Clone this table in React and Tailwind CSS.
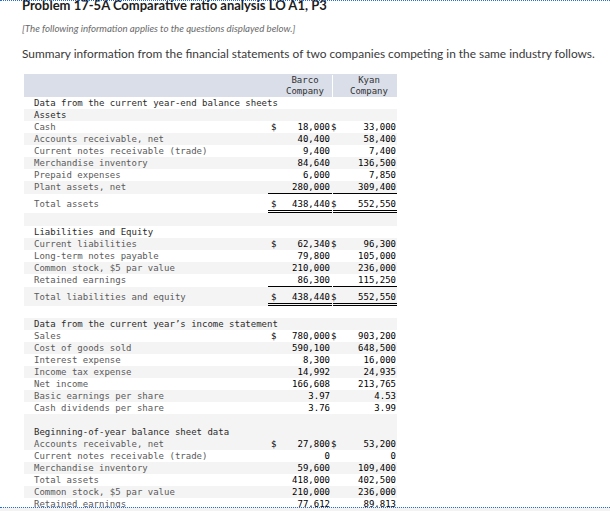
import React from 'react';

const mono = { fontFamily: '"DejaVu Sans Mono", "Liberation Mono", monospace' };

const rows = [
  { label: 'Data from the current year-end balance sheets', head: true },
  { label: 'Assets', head: true, g: true },
  { label: 'Cash', b: '18,000', k: '33,000', d: true },
  { label: 'Accounts receivable, net', b: '40,400', k: '58,400', g: true },
  { label: 'Current notes receivable (trade)', b: '9,400', k: '7,400' },
  { label: 'Merchandise inventory', b: '84,640', k: '136,500', g: true },
  { label: 'Prepaid expenses', b: '6,000', k: '7,850' },
  { label: 'Plant assets, net', b: '280,000', k: '309,400', g: true, under: true },
  { label: 'Total assets', b: '438,440', k: '552,550', d: true, total: true },
  { blank: true, h: 'h-[13px]', g: true },
  { label: 'Liabilities and Equity', head: true },
  { label: 'Current liabilities', b: '62,340', k: '96,300', d: true, g: true },
  { label: 'Long-term notes payable', b: '79,800', k: '105,000' },
  { label: 'Common stock, $5 par value', b: '210,000', k: '236,000', g: true },
  { label: 'Retained earnings', b: '86,300', k: '115,250', under: true },
  { label: 'Total liabilities and equity', b: '438,440', k: '552,550', d: true, total: true, g: true },
  { blank: true, h: 'h-[12px]' },
  { label: 'Data from the current year\u2019s income statement', head: true, g: true },
  { label: 'Sales', b: '780,000', k: '903,200', d: true },
  { label: 'Cost of goods sold', b: '590,100', k: '648,500', g: true },
  { label: 'Interest expense', b: '8,300', k: '16,000' },
  { label: 'Income tax expense', b: '14,992', k: '24,935', g: true },
  { label: 'Net income', b: '166,608', k: '213,765' },
  { label: 'Basic earnings per share', b: '3.97', k: '4.53', g: true },
  { label: 'Cash dividends per share', b: '3.76', k: '3.99' },
  { blank: true, h: 'h-[12px]', g: true },
  { label: 'Beginning-of-year balance sheet data', head: true, g: true },
  { label: 'Accounts receivable, net', b: '27,800', k: '53,200', d: true, g: true },
  { label: 'Current notes receivable (trade)', b: '0', k: '0' },
  { label: 'Merchandise inventory', b: '59,600', k: '109,400', g: true },
  { label: 'Total assets', b: '418,000', k: '402,500' },
  { label: 'Common stock, $5 par value', b: '210,000', k: '236,000', g: true },
  { label: 'Retained earnings', b: '77,612', k: '89,813' },
];

function Row({ r }) {
  const bg = r.g ? 'bg-[#f4f4f4]' : 'bg-white';
  if (r.blank) return <div className={`${r.h} ${bg}`} />;
  const line = r.total
    ? 'border-b-[3px] border-double border-black'
    : r.under
    ? 'border-b border-black'
    : '';
  return (
    <div className={`flex ${bg} ${r.total ? 'pt-[4px]' : ''}`}>
      <div
        className={`w-[244px] shrink-0 whitespace-nowrap pl-[10px] ${
          r.head ? 'text-[#2b2b2b]' : 'text-[#5a5a5a]'
        }`}
      >
        {r.label}
      </div>
      {!r.head && (
        <>
          <div className={`w-[64px] shrink-0 flex justify-between pl-[3px] pr-[2px] ${line}`}>
            <span>{r.d ? '$' : ''}</span>
            <span>{r.b}</span>
          </div>
          <div className="w-[1px] shrink-0" />
          <div className={`w-[64px] shrink-0 flex justify-between pr-[1px] ${line}`}>
            <span className="-ml-[2px]">{r.d ? '$' : ''}</span>
            <span>{r.k}</span>
          </div>
        </>
      )}
    </div>
  );
}

export default function App() {
  return (
    <div className="relative h-[511px] w-[610px] overflow-hidden bg-white">
      {/* focus outline edges */}
      <div className="absolute left-0 right-0 top-0 z-10 border-t border-dotted border-[#2a6fcf]" />
      <div className="absolute left-0 right-0 top-[507px] z-10 h-[4px] border-t border-dotted border-[#2a6fcf] bg-[#f3f3f3]" />

      <div className="pl-[22px]" style={{ fontFamily: 'Lato, "Open Sans", sans-serif' }}>
        <h1 className="-mt-[3px] whitespace-nowrap text-[13px] font-bold leading-[16px] text-[#1c1c1c]">
          Problem 17-5A Comparative ratio analysis LO A1, P3
        </h1>
        <p className="mt-[8px] whitespace-nowrap text-[9.7px] italic leading-[14px] text-[#6a6a6a]">
          [The following information applies to the questions displayed below.]
        </p>
        <p className="mt-[12px] whitespace-nowrap text-[11.9px] leading-[14px] text-[#3a3a3a]">
          Summary information from the financial statements of two companies competing in the same industry follows.
        </p>
      </div>

      <div className="ml-[24px] mt-[13px] w-[373px] text-[9px] leading-[12px]" style={mono}>
        <div className="flex h-[23px] bg-[#d9dee8] text-[#333] pt-[1px]">
          <div className="w-[244px] shrink-0" />
          <div className="w-[64px] shrink-0 pl-[10px] text-center leading-[11px]">
            Barco
            <br />
            Company
          </div>
          <div className="w-[1px] shrink-0 bg-white" />
          <div className="w-[64px] shrink-0 pl-[8px] text-center leading-[11px]">
            Kyan
            <br />
            Company
          </div>
        </div>
        {rows.map((r, i) => (
          <Row key={i} r={r} />
        ))}
      </div>
    </div>
  );
}
